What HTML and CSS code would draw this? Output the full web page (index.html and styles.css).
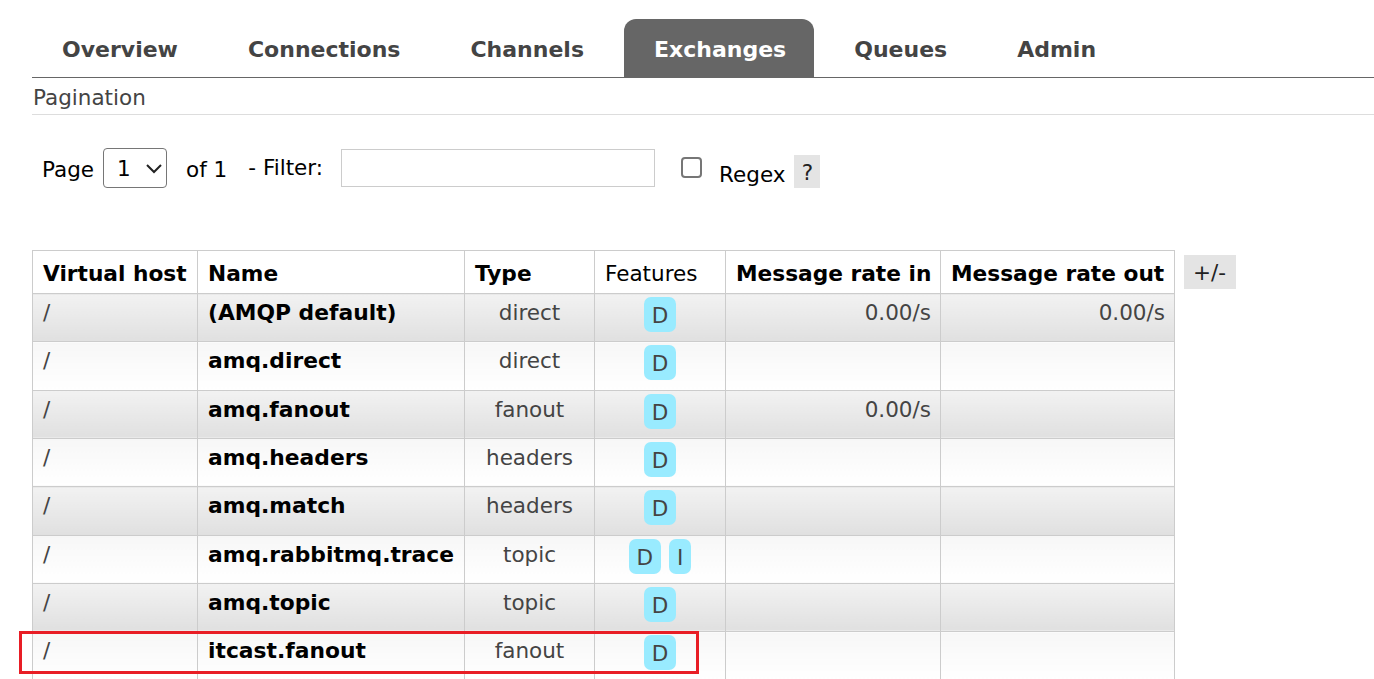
FILE: index.html
```
<!DOCTYPE html>
<html>
<head>
<meta charset="utf-8">
<link rel="stylesheet" href="styles.css">
</head>
<body>
<div class="page">
  <ul class="tabs">
    <li class="tab">Overview</li>
    <li class="tab">Connections</li>
    <li class="tab">Channels</li>
    <li class="tab active">Exchanges</li>
    <li class="tab">Queues</li>
    <li class="tab">Admin</li>
  </ul>
  <h3 class="section-title">Pagination</h3>
  <div class="pager">
    <span class="lbl lbl-page">Page</span>
    <div class="select"><span>1</span>
      <svg width="18" height="12" viewBox="0 0 18 12"><path d="M2 3 L9 10 L16 3" fill="none" stroke="#222" stroke-width="2"/></svg>
    </div>
    <span class="lbl lbl-of">of 1</span>
    <span class="lbl lbl-filter">- Filter:</span>
    <input class="filter-input" type="text">
    <span class="checkbox"></span>
    <span class="lbl lbl-regex">Regex</span>
    <span class="help">?</span>
  </div>
  <div class="table-wrap">
    <table class="list">
      <colgroup>
        <col class="c1"><col class="c2"><col class="c3"><col class="c4"><col class="c5"><col class="c6">
      </colgroup>
      <thead>
        <tr>
          <th>Virtual host</th>
          <th>Name</th>
          <th>Type</th>
          <th class="plain">Features</th>
          <th>Message rate in</th>
          <th>Message rate out</th>
        </tr>
      </thead>
      <tbody>
        <tr class="alt1"><td>/</td><td class="name">(AMQP default)</td><td class="type">direct</td><td class="feat"><div class="badges"><span class="badge">D</span></div></td><td class="rate">0.00/s</td><td class="rate">0.00/s</td></tr>
        <tr class="alt2"><td>/</td><td class="name">amq.direct</td><td class="type">direct</td><td class="feat"><div class="badges"><span class="badge">D</span></div></td><td class="rate"></td><td class="rate"></td></tr>
        <tr class="alt1"><td>/</td><td class="name">amq.fanout</td><td class="type">fanout</td><td class="feat"><div class="badges"><span class="badge">D</span></div></td><td class="rate">0.00/s</td><td class="rate"></td></tr>
        <tr class="alt2"><td>/</td><td class="name">amq.headers</td><td class="type">headers</td><td class="feat"><div class="badges"><span class="badge">D</span></div></td><td class="rate"></td><td class="rate"></td></tr>
        <tr class="alt1"><td>/</td><td class="name">amq.match</td><td class="type">headers</td><td class="feat"><div class="badges"><span class="badge">D</span></div></td><td class="rate"></td><td class="rate"></td></tr>
        <tr class="alt2"><td>/</td><td class="name">amq.rabbitmq.trace</td><td class="type">topic</td><td class="feat"><div class="badges"><span class="badge">D</span><span class="badge">I</span></div></td><td class="rate"></td><td class="rate"></td></tr>
        <tr class="alt1"><td>/</td><td class="name">amq.topic</td><td class="type">topic</td><td class="feat"><div class="badges"><span class="badge">D</span></div></td><td class="rate"></td><td class="rate"></td></tr>
        <tr class="alt2"><td>/</td><td class="name">itcast.fanout</td><td class="type">fanout</td><td class="feat"><div class="badges"><span class="badge">D</span></div></td><td class="rate"></td><td class="rate"></td></tr>
      </tbody>
    </table>
    <span class="toggle">+/-</span>
  </div>
  <div class="highlight"></div>
</div>
</body>
</html>
```
FILE: styles.css
```
html, body {
  margin: 0;
  padding: 0;
  background: #fff;
}
body {
  font-family: "DejaVu Sans", Verdana, sans-serif;
  font-size: 21.5px;
  color: #444;
  overflow: hidden;
}
.page {
  position: relative;
  padding-left: 32px;
  height: 679px;
}
.tabs {
  list-style: none;
  margin: 0;
  padding: 19px 0 0 0;
  display: flex;
  border-bottom: 1px solid #666;
}
.tab {
  height: 58px;
  box-sizing: border-box;
  line-height: 54px;
  padding: 4px 30px 0 30px;
  margin-right: 10px;
  font-size: 22px;
  font-weight: bold;
  color: #444;
  border-radius: 12px 12px 0 0;
}
.tab.active {
  background: #666;
  color: #fff;
  padding: 4px 28px 0 30px;
}
.section-title {
  margin: 0;
  font-size: 21.5px;
  font-weight: normal;
  line-height: 26px;
  padding: 7px 0 3px 1px;
  border-bottom: 1px solid #ddd;
  color: #444;
}
.pager {
  display: flex;
  align-items: flex-start;
  height: 40px;
  margin-top: 33px;
  color: #000;
}
.lbl {
  line-height: 26px;
  white-space: nowrap;
}
.lbl-page { margin: 9px 0 0 10px; }
.select {
  margin-left: 9px;
  width: 64px;
  height: 40px;
  box-sizing: border-box;
  border: 1px solid #767676;
  border-radius: 4px;
  display: flex;
  align-items: center;
  padding-left: 13px;
  gap: 14px;
  color: #000;
}
.lbl-of { margin: 9px 0 0 19px; }
.lbl-filter { margin: 7px 0 0 21px; }
.filter-input {
  margin: 1px 0 0 18px;
  width: 314px;
  height: 38px;
  box-sizing: border-box;
  border: 1px solid #ccc;
  padding: 0;
  outline: none;
}
.checkbox {
  margin: 9px 0 0 26px;
  width: 21px;
  height: 21px;
  box-sizing: border-box;
  border: 2px solid #767676;
  border-radius: 4px;
  background: #fff;
}
.lbl-regex { margin: 14px 0 0 17px; }
.help {
  margin: 7px 0 0 9px;
  width: 26px;
  height: 33px;
  line-height: 35px;
  background: #e4e4e4;
  text-align: center;
  color: #222;
}
.table-wrap {
  margin-top: 62px;
  display: flex;
  align-items: flex-start;
  gap: 9px;
}
table.list {
  border-collapse: collapse;
  table-layout: fixed;
  width: 1142px;
}
col.c1 { width: 165px; }
col.c2 { width: 267px; }
col.c3 { width: 130px; }
col.c4 { width: 131px; }
col.c5 { width: 215px; }
col.c6 { width: 234px; }
table.list th, table.list td {
  border: 1px solid #ccc;
  padding: 0 9px 0 10px;
  vertical-align: top;
  text-align: left;
  white-space: nowrap;
  line-height: 26px;
}
table.list th {
  height: 43px;
  box-sizing: border-box;
  padding-top: 10px;
  color: #000;
  font-weight: bold;
  font-size: 21.7px;
  background: #fff;
}
table.list th.plain {
  font-weight: normal;
  font-size: 21.5px;
  padding-left: 10px;
}
table.list td {
  height: 48.33px;
  box-sizing: border-box;
  padding-top: 6px;
  color: #444;
}
table.list tr.alt1 td {
  background: linear-gradient(#f2f2f2, #e0e0e0);
}
table.list tr.alt2 td {
  background: linear-gradient(#f7f7f7, #fff);
}
table.list td.name {
  font-weight: bold;
  font-size: 21.8px;
  color: #000;
}
table.list td.type {
  text-align: center;
  padding-left: 0;
  padding-right: 0;
}
table.list td.rate {
  text-align: right;
}
table.list td.feat {
  padding: 3px 0 0 0;
}
.badges {
  display: flex;
  justify-content: center;
  gap: 8px;
}
.badge {
  display: inline-block;
  height: 35px;
  line-height: 38px;
  padding: 0 8px;
  border-radius: 7px;
  background: #99ebff;
  color: #444;
}
.toggle {
  margin-top: 5px;
  height: 34px;
  line-height: 35px;
  padding: 0 10px 0 9px;
  background: #e4e4e4;
  color: #222;
}
.highlight {
  position: absolute;
  left: 19px;
  top: 631px;
  width: 680px;
  height: 43px;
  box-sizing: border-box;
  border: 3px solid #e81d25;
  pointer-events: none;
}
```
